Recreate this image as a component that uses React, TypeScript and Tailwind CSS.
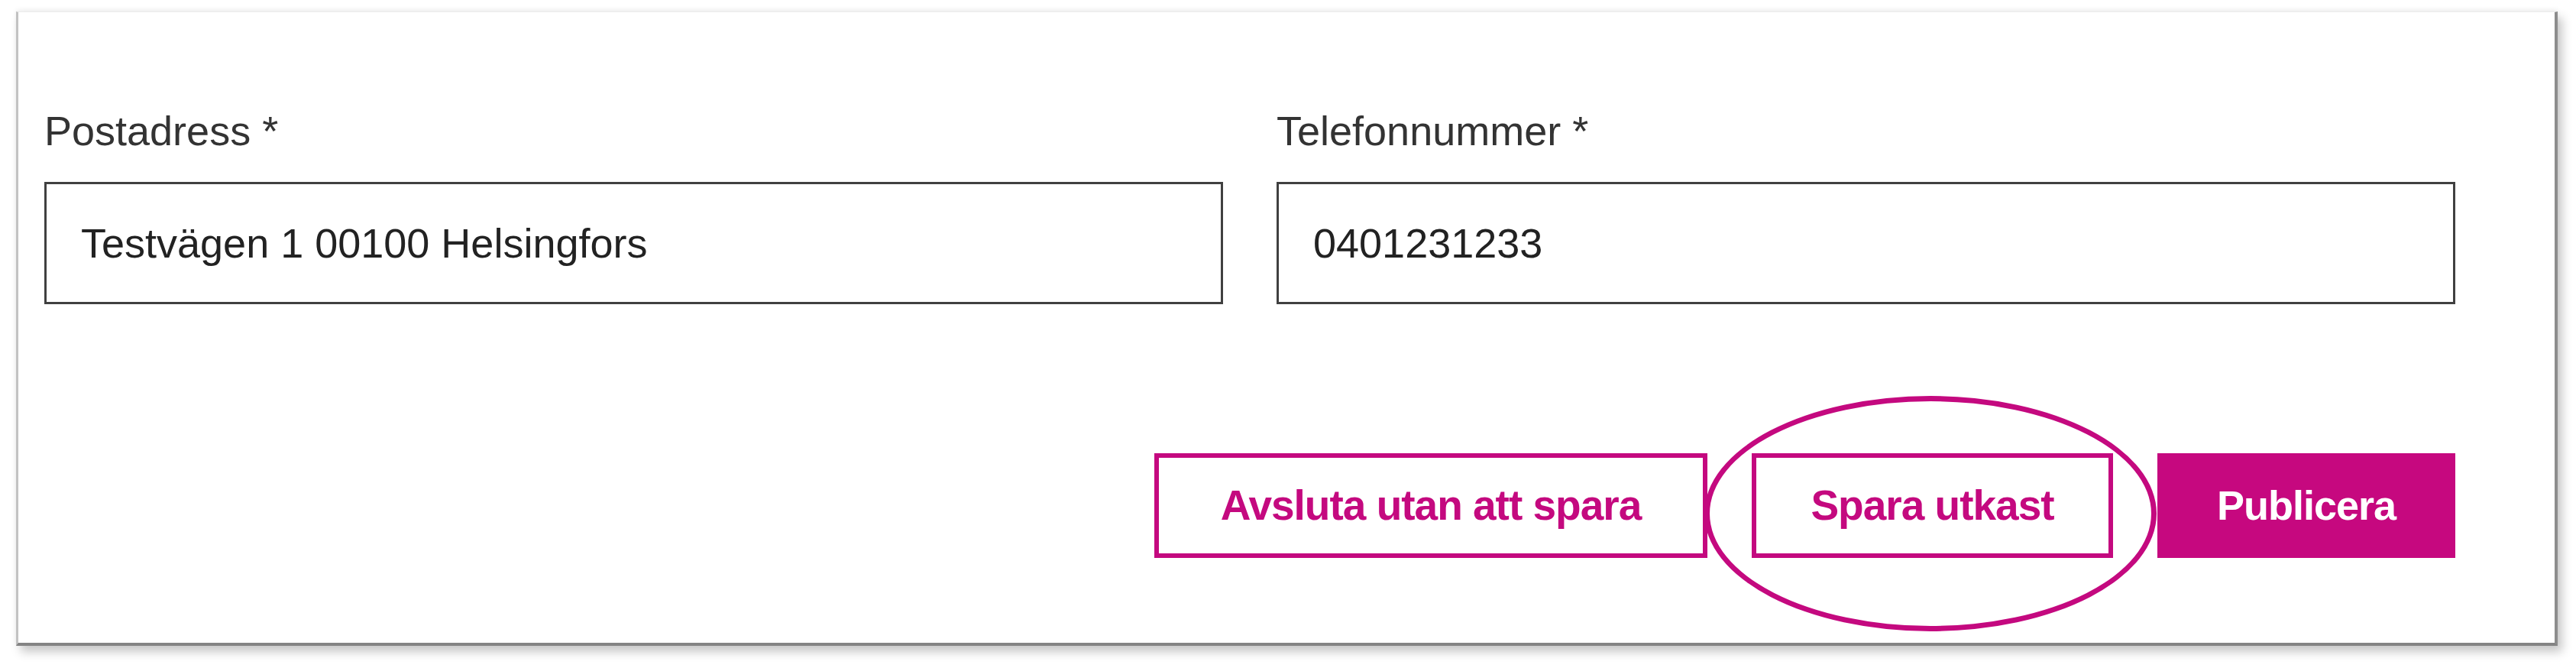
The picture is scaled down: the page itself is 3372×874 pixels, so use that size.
const fields = [
  { label: 'Postadress *', value: 'Testvägen 1 00100 Helsingfors' },
  { label: 'Telefonnummer *', value: '0401231233' },
];

function Field({ label, value }: { label: string; value: string }) {
  return (
    <div className="flex flex-col">
      <label className="text-[54px] leading-[60px] text-[#333333] mb-[37px]">{label}</label>
      <div className="h-[160px] border-[3px] border-[#404040] flex items-center pl-[45px] text-[54px] leading-[60px] text-[#222222]">
        {value}
      </div>
    </div>
  );
}

export default function App() {
  return (
    <div
      className="w-[3372px] h-[874px] bg-white pt-[15px] pl-[21px]"
      style={{ fontFamily: '"Liberation Sans", Arial, sans-serif' }}
    >
      <div className="w-[3327px] h-[830px] bg-white border-t border-t-[#ececec] border-l-[3px] border-l-[#c2c2c2] border-r-[4px] border-r-[#8c8c8c] border-b-[4px] border-b-[#848484] shadow-[6px_8px_12px_rgba(0,0,0,0.22),0_-3px_6px_rgba(0,0,0,0.05)] pt-[125px] pl-[34px]">
        <div className="w-[3156px] grid grid-cols-2 gap-x-[70px]">
          {fields.map((f) => (
            <Field key={f.label} label={f.label} value={f.value} />
          ))}
        </div>

        <div className="w-[3156px] mt-[195px] flex justify-end gap-[58px]">
          <button className="w-[724px] h-[137px] border-[6px] border-[#c4097f] text-[#c4097f] font-bold text-[55px] tracking-[-1px] flex items-center justify-center">
            Avsluta utan att spara
          </button>
          <div className="relative">
            <button className="w-[473px] h-[137px] border-[6px] border-[#c4097f] text-[#c4097f] font-bold text-[55px] tracking-[-1px] flex items-center justify-center">
              Spara utkast
            </button>
            {/* annotation ring drawn over the button */}
            <div className="absolute left-[-62px] top-[-75px] w-[592px] h-[308px] rounded-[50%] border-[7px] border-[#c4097f] pointer-events-none" />
          </div>
          <button className="w-[390px] h-[137px] bg-[#c6087f] text-white font-bold text-[54px] tracking-[-1px] flex items-center justify-center">
            Publicera
          </button>
        </div>
      </div>
    </div>
  );
}
